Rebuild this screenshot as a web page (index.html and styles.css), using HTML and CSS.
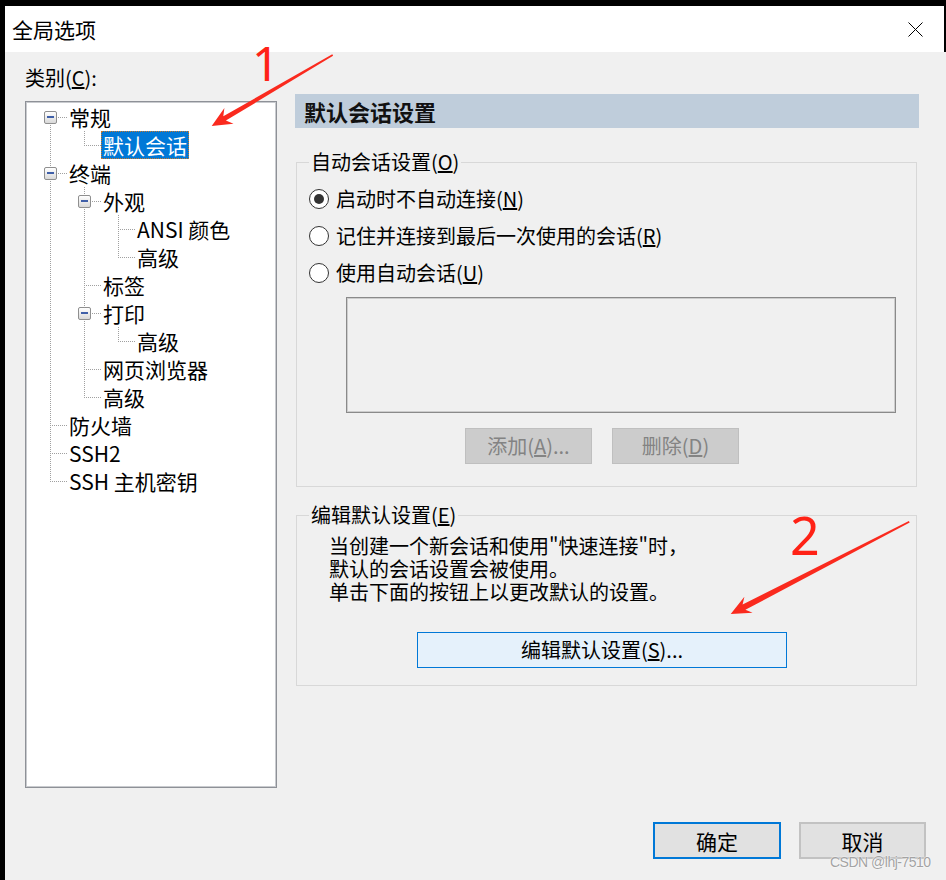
FILE: index.html
```html
<!DOCTYPE html>
<html lang="zh-CN">
<head>
    <meta charset="UTF-8">
    <meta name="viewport" content="width=device-width, initial-scale=1.0">
    <title>全局选项</title>
    <link rel="stylesheet" href="styles.css">
</head>
<body>
    <div class="window">
        <div class="titlebar">
            <span class="title">全局选项</span>
            <svg class="close-icon" viewBox="0 0 15 15" aria-label="关闭">
                <path d="M0.5 0.5 L14.5 14.5 M14.5 0.5 L0.5 14.5" stroke="#000" stroke-width="1" fill="none"/>
            </svg>
        </div>

        <div class="dialog">
            <div class="main">
                <!-- 左侧：类别树 -->
                <div class="category">
                    <label class="cat-label">类别(<u>C</u>):</label>
                    <div class="tree">
                        <div class="row"><span class="cell first"><span class="box"></span></span><span class="node">常规</span></div>
                        <div class="row"><span class="cell v"></span><span class="cell l"></span><span class="node selected">默认会话</span></div>
                        <div class="row"><span class="cell t"><span class="box"></span></span><span class="node">终端</span></div>
                        <div class="row"><span class="cell v"></span><span class="cell t"><span class="box"></span></span><span class="node">外观</span></div>
                        <div class="row"><span class="cell v"></span><span class="cell v"></span><span class="cell t"></span><span class="node">ANSI 颜色</span></div>
                        <div class="row"><span class="cell v"></span><span class="cell v"></span><span class="cell l"></span><span class="node">高级</span></div>
                        <div class="row"><span class="cell v"></span><span class="cell t"></span><span class="node">标签</span></div>
                        <div class="row"><span class="cell v"></span><span class="cell t"><span class="box"></span></span><span class="node">打印</span></div>
                        <div class="row"><span class="cell v"></span><span class="cell v"></span><span class="cell l"></span><span class="node">高级</span></div>
                        <div class="row"><span class="cell v"></span><span class="cell t"></span><span class="node">网页浏览器</span></div>
                        <div class="row"><span class="cell v"></span><span class="cell l"></span><span class="node">高级</span></div>
                        <div class="row"><span class="cell t"></span><span class="node">防火墙</span></div>
                        <div class="row"><span class="cell t"></span><span class="node">SSH2</span></div>
                        <div class="row"><span class="cell l"></span><span class="node">SSH 主机密钥</span></div>
                    </div>
                </div>

                <!-- 右侧：设置面板 -->
                <div class="panel">
                    <h2 class="panel-title">默认会话设置</h2>

                    <fieldset class="group group-auto">
                        <legend>自动会话设置(<u>O</u>)</legend>
                        <label class="radio-row first-radio"><span class="radio checked"></span><span>启动时不自动连接(<u>N</u>)</span></label>
                        <label class="radio-row"><span class="radio"></span><span>记住并连接到最后一次使用的会话(<u>R</u>)</span></label>
                        <label class="radio-row"><span class="radio"></span><span>使用自动会话(<u>U</u>)</span></label>
                        <div class="listbox"></div>
                        <div class="list-buttons">
                            <button class="btn btn-disabled">添加(<u>A</u>)...</button>
                            <button class="btn btn-disabled">删除(<u>D</u>)</button>
                        </div>
                    </fieldset>

                    <fieldset class="group group-edit">
                        <legend>编辑默认设置(<u>E</u>)</legend>
                        <div class="note">
                            <div class="note-line">当创建一个新会话和使用"快速连接"时，</div>
                            <div class="note-line">默认的会话设置会被使用。</div>
                            <div class="note-line">单击下面的按钮上以更改默认的设置。</div>
                        </div>
                        <div class="edit-row">
                            <button class="btn btn-edit">编辑默认设置(<u>S</u>)...</button>
                        </div>
                    </fieldset>
                </div>
            </div>

            <div class="footer">
                <button class="btn btn-ok">确定</button>
                <button class="btn btn-cancel">取消</button>
            </div>
        </div>
    </div>

    <!-- 标注 -->
    <div class="annot">
        <svg class="arrows" width="946" height="880" viewBox="0 0 946 880">
            <polygon fill="#fa2a1e" points="211.7,126 233.5,123.7 225.9,120.6 333.1,55.7 332.3,54.3 223.3,116.2 224.4,108.1"/>
            <polygon fill="#fa2a1e" points="730.7,614 752.6,612.8 745.4,609.8 909.7,522.4 908.9,521 742.6,604.4 744.4,596.8"/>
        </svg>
        <span class="num num-1">1</span>
        <span class="num num-2">2</span>
    </div>

    <span class="watermark">CSDN @lhj-7510</span>
</body>
</html>
```

FILE: styles.css
```css
body {
    margin: 0;
    width: 946px;
    height: 880px;
    overflow: hidden;
    position: relative;
    background: #000;
    font-family: "Noto Sans CJK SC", "Noto Sans", sans-serif;
    color: #000;
}

.window {
    margin: 6px 0 0 5px;
    height: 874px;
    display: flex;
    flex-direction: column;
}

/* 标题栏 */
.titlebar {
    height: 46px;
    margin-right: 2px;
    padding: 0 21px 0 7px;
    background: #fff;
    display: flex;
    align-items: center;
    justify-content: space-between;
}

.title {
    font-size: 21px;
    line-height: 24px;
}

.close-icon {
    width: 15px;
    height: 15px;
    display: block;
}

.dialog {
    flex: 1;
    background: #f0f0f0;
    padding: 14px 20px 0 20px;
}

.main {
    display: flex;
    align-items: flex-start;
    gap: 18px;
}

/* 类别树 */
.category {
    width: 252px;
}

.cat-label {
    display: block;
    font-size: 20px;
    line-height: 24px;
    margin-bottom: 11px;
}

.tree {
    height: 687px;
    box-sizing: border-box;
    padding: 1px 0 0 7px;
    background: #fff;
    border: 1px solid #8e9197;
    box-shadow: inset 0 0 0 1px #c9cbcf;
}

.row {
    display: flex;
    align-items: center;
    height: 28px;
}

.cell {
    width: 34px;
    height: 28px;
    flex-shrink: 0;
    display: flex;
    align-items: center;
    justify-content: center;
    background-repeat: no-repeat;
}

.cell.v {
    background-image: repeating-linear-gradient(to bottom, #a0a0a0 0 1px, transparent 1px 2px);
    background-position: 17px 0;
    background-size: 1px 28px;
}

.cell.t {
    background-image:
        repeating-linear-gradient(to bottom, #a0a0a0 0 1px, transparent 1px 2px),
        repeating-linear-gradient(to right, #a0a0a0 0 1px, transparent 1px 2px);
    background-position: 17px 0, 17px 14px;
    background-size: 1px 28px, 17px 1px;
}

.cell.l {
    background-image:
        repeating-linear-gradient(to bottom, #a0a0a0 0 1px, transparent 1px 2px),
        repeating-linear-gradient(to right, #a0a0a0 0 1px, transparent 1px 2px);
    background-position: 17px 0, 17px 14px;
    background-size: 1px 14px, 17px 1px;
}

.cell.first {
    background-image:
        repeating-linear-gradient(to bottom, #a0a0a0 0 1px, transparent 1px 2px),
        repeating-linear-gradient(to right, #a0a0a0 0 1px, transparent 1px 2px);
    background-position: 17px 14px, 17px 14px;
    background-size: 1px 14px, 17px 1px;
}

.box {
    width: 13px;
    height: 13px;
    box-sizing: border-box;
    border: 1px solid #8f8f8f;
    border-radius: 2px;
    background: linear-gradient(#ffffff, #d9d9d9);
    display: flex;
    align-items: center;
    justify-content: center;
}

.box::after {
    content: "";
    width: 7px;
    height: 2px;
    background: #3f5fa8;
}

.node {
    font-size: 21px;
    line-height: 28px;
    padding: 0 2px;
    white-space: nowrap;
}

.node.selected {
    background: #0078d7;
    color: #fff;
    outline: 1px dotted #c8782c;
    outline-offset: -1px;
}

/* 右侧面板 */
.panel {
    width: 624px;
    margin-top: 28px;
}

.panel-title {
    margin: 0;
    height: 34px;
    padding-left: 9px;
    background: #bfcddb;
    font-size: 22px;
    font-weight: 700;
    line-height: 34px;
    color: #111;
}

.group {
    margin: 22px 2px 0 1px;
    padding: 0 0 22px 12px;
    border: 1px solid #d8d8d8;
    min-width: 0;
}

.group legend {
    padding: 0 2px;
    font-size: 20px;
    line-height: 24px;
}

.group-edit {
    margin-top: 16px;
    padding-bottom: 17px;
}

.radio-row {
    display: flex;
    align-items: center;
    gap: 7px;
    height: 37px;
    font-size: 20px;
    line-height: 24px;
}

.first-radio {
    margin-top: 6px;
}

.radio {
    width: 20px;
    height: 20px;
    box-sizing: border-box;
    border: 1px solid #333;
    border-radius: 50%;
    background: #fff;
    display: flex;
    align-items: center;
    justify-content: center;
}

.radio.checked::after {
    content: "";
    width: 10px;
    height: 10px;
    border-radius: 50%;
    background: #333;
}

.listbox {
    width: 550px;
    height: 116px;
    box-sizing: border-box;
    margin: 6px 0 0 37px;
    border: 1px solid #8a8a8a;
    box-shadow: inset 0 0 0 1px #cdcdcd;
}

.list-buttons {
    display: flex;
    gap: 20px;
    margin: 15px 0 0 156px;
}

.btn {
    height: 36px;
    box-sizing: border-box;
    padding: 0;
    font-family: inherit;
    font-size: 20px;
    line-height: 24px;
    color: #000;
    background: #e1e1e1;
    border: 1px solid #adadad;
}

.btn-disabled {
    width: 127px;
    background: #cccccc;
    border-color: #bfbfbf;
    color: #838383;
}

.note {
    margin: 7px 0 0 20px;
    font-size: 20px;
}

.note-line {
    height: 23px;
    line-height: 23px;
    white-space: nowrap;
}

.edit-row {
    margin-top: 29px;
    padding-left: 108px;
}

.btn-edit {
    width: 370px;
    background: #e5f1fb;
    border-color: #0078d7;
}

/* 底部按钮 */
.footer {
    display: flex;
    justify-content: flex-end;
    gap: 18px;
    margin-top: 34px;
}

.btn-ok,
.btn-cancel {
    height: 37px;
    font-size: 21px;
}

.btn-ok {
    width: 128px;
    border: 2px solid #0078d7;
}

.btn-cancel {
    width: 127px;
    border: 2px solid #c2c2c2;
}

/* 标注 */
.annot {
    position: absolute;
    left: 0;
    top: 0;
    width: 946px;
    height: 880px;
    pointer-events: none;
}

.arrows {
    display: block;
}

.num {
    position: absolute;
    font-family: "Noto Sans", sans-serif;
    font-size: 48px;
    line-height: 48px;
    color: #ff2216;
}

.num-1 {
    left: 252px;
    top: 39px;
}

.num-2 {
    left: 790px;
    top: 509px;
    font-size: 52px;
    line-height: 52px;
}

.watermark {
    position: absolute;
    left: 830px;
    top: 855px;
    font-family: "Liberation Sans", sans-serif;
    font-size: 14px;
    line-height: 14px;
    letter-spacing: -0.5px;
    color: #a3a3a3;
    text-shadow: 0 0 2px #fff, 0 0 1px #fff;
}
```
